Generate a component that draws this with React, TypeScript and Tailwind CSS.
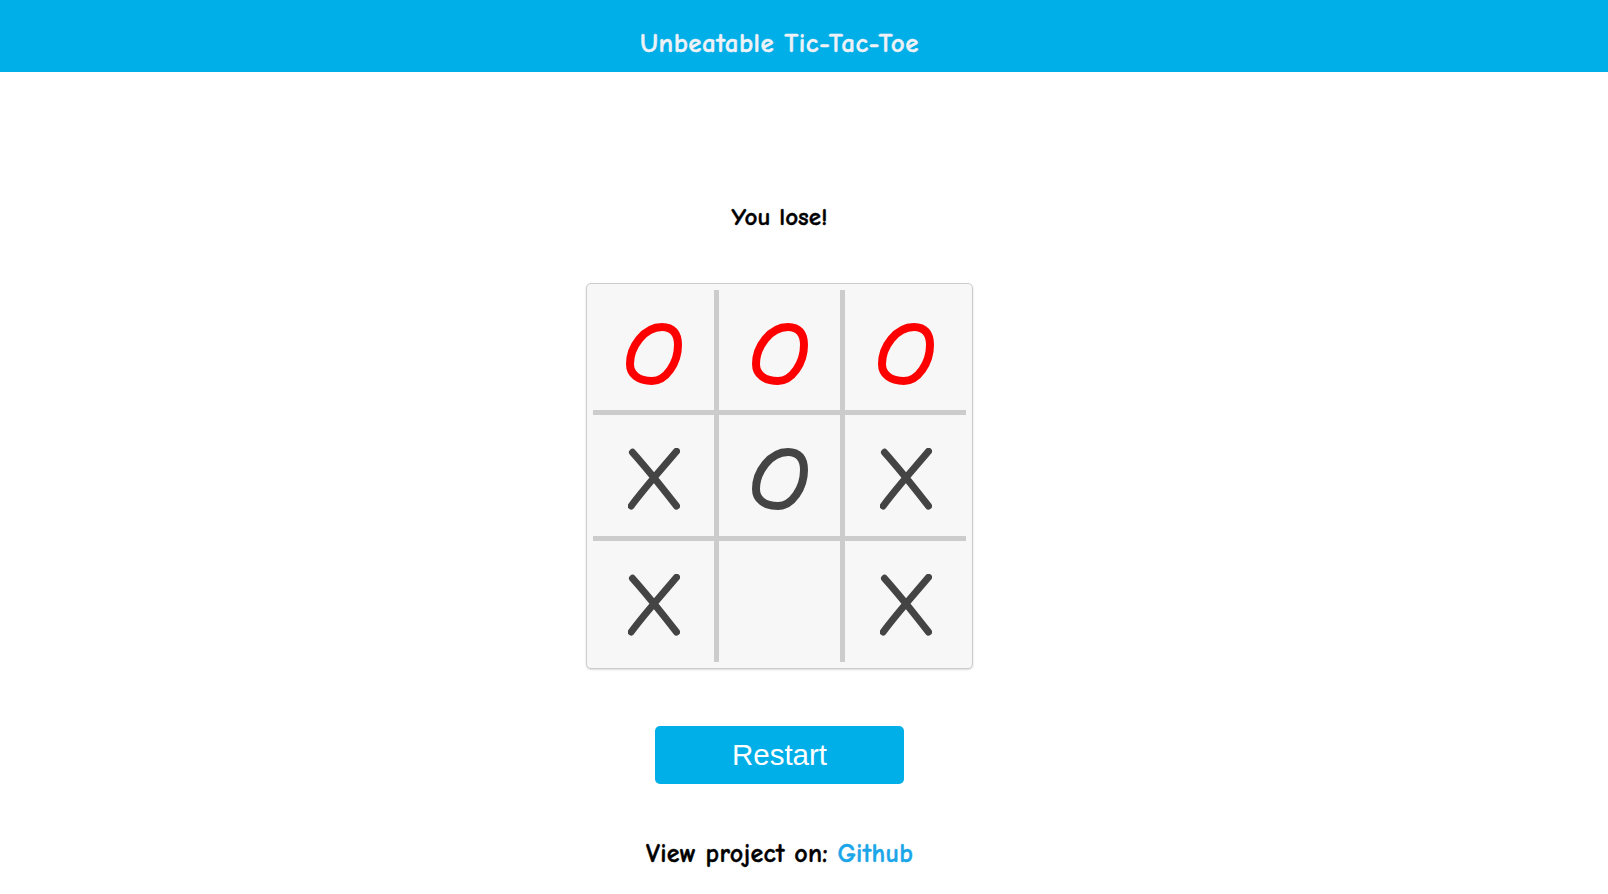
import React from "react";

const FONT = '"Comic Sans MS", "Comic Neue", "Open Sans", sans-serif';

function OMark({ color }: { color: string }) {
  return (
    <svg width="56" height="62" viewBox="0 0 56 62" fill="none">
      <path
        d="M36 4 C 47 4 52 10.5 52 22 C 52 40 40 58 26 58 C 12.5 58 4 51.5 4 41 C 4 24 18 4 36 4 Z"
        stroke={color}
        strokeWidth="8"
      />
    </svg>
  );
}

function XMark() {
  return (
    <svg width="52" height="62" viewBox="-0.5 0 52 62" fill="none">
      <path
        d="M4 4.3 C 18 20, 34 40, 48 58 M48 3.3 C 34 20, 16 40, 2.7 58"
        stroke="#444444"
        strokeWidth="7"
        strokeLinecap="round"
      />
    </svg>
  );
}

type Cell = "O" | "o" | "X" | "";

const board: Cell[] = ["O", "O", "O", "X", "o", "X", "X", "", "X"];

export default function App() {
  return (
    <div className="min-h-[894px] bg-white" style={{ fontFamily: FONT }}>
      <header className="h-[72px] bg-[#00aee8] pr-[49px] flex justify-center">
        <h1 className="pt-[30px] text-[27px] leading-[28px] font-bold text-[#eef2f7] tracking-[0.45px] [-webkit-text-stroke:0.4px_#eef2f7]">
          Unbeatable Tic-Tac-Toe
        </h1>
      </header>
      <main className="pr-[49px] flex flex-col items-center">
        <p className="mt-[132px] text-[25px] leading-[26px] font-bold text-black [-webkit-text-stroke:0.4px_#000]">
          You lose!
        </p>
        <div className="mt-[53px] rounded-[5px] border border-[#cccccc] bg-[#f7f7f7] p-[6px] shadow-[0_1px_2px_rgba(0,0,0,0.15)]">
          <div className="grid grid-cols-[121px_121px_121px] grid-rows-[120px_121px_121px] gap-[5px] bg-[#cccccc]">
            {board.map((c, i) => (
              <div
                key={i}
                className="bg-[#f7f7f7] flex items-center justify-center pt-[7px]"
              >
                {c === "O" && <OMark color="#ff0000" />}
                {c === "o" && <OMark color="#444444" />}
                {c === "X" && <XMark />}
              </div>
            ))}
          </div>
        </div>
        <button
          className="mt-[57px] w-[249px] h-[58px] rounded-[5px] bg-[#00aee8] text-white text-[29.5px] leading-[58px]"
          style={{ fontFamily: '"Liberation Sans", Arial, sans-serif' }}
        >
          Restart
        </button>
        <p className="mt-[57px] text-[26px] leading-[26px] font-bold text-black tracking-[0.25px] [-webkit-text-stroke:0.4px_#000]">
          View project on:{" "}
          <span className="text-[#1aa6e8] [-webkit-text-stroke:0.4px_#1aa6e8]">Github</span>
        </p>
      </main>
    </div>
  );
}
